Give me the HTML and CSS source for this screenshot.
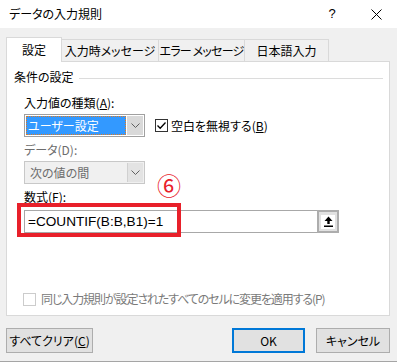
FILE: index.html
```html
<!DOCTYPE html>
<html lang="ja">
<head>
<meta charset="utf-8">
<link rel="stylesheet" href="styles.css">
</head>
<body>
<div class="dialog">
  <div class="titlebar">
    <span class="title">データの入力規則</span>
    <span class="tb-help">?</span>
    <span class="tb-close"><svg width="11" height="11" viewBox="0 0 11 11"><path d="M0.5 0.5 L10.5 10.5 M10.5 0.5 L0.5 10.5" stroke="#000" stroke-width="1" fill="none"/></svg></span>
  </div>
  <div class="main">
    <div class="tabs">
      <div class="tab active">設定</div>
      <div class="tab t2">入力時メッセージ</div>
      <div class="tab t3">エラー メッセージ</div>
      <div class="tab t4">日本語入力</div>
    </div>
    <div class="panel">
      <div class="group-head"><span>条件の設定</span><i class="rule"></i></div>
      <div class="indent">
        <div class="label l1">入力値の種類(<u>A</u>):</div>
        <div class="row">
          <div class="combo">
            <div class="combo-field"><span class="sel">ユーザー設定</span></div>
            <div class="drop"><svg width="9" height="5" viewBox="0 0 9 5"><path d="M0.5 0.5 L4.5 4.5 L8.5 0.5" stroke="#606060" fill="none" stroke-width="1"/></svg></div>
          </div>
          <div class="check">
            <span class="box"><svg width="11" height="11" viewBox="0 0 11 11"><path d="M1.5 5.5 L4.2 8.3 L9.5 2.5" stroke="#000" stroke-width="1.3" fill="none"/></svg></span>
            <span>空白を無視する(<u>B</u>)</span>
          </div>
        </div>
        <div class="label l2 dim">データ(D):</div>
        <div class="combo disabled">
          <div class="combo-field"><span class="val">次の値の間</span></div>
          <div class="drop"><svg width="9" height="5" viewBox="0 0 9 5"><path d="M0.5 0.5 L4.5 4.5 L8.5 0.5" stroke="#606060" fill="none" stroke-width="1"/></svg></div>
        </div>
        <div class="label l3">数式(F):</div>
        <div class="formula">
          <div class="formula-text">=COUNTIF(B:B,B1)=1</div>
          <div class="ref-btn"><span class="ref-icon"><svg width="9" height="11" viewBox="0 0 9 11"><path d="M4.5 0.5 L8.5 5 L5.7 5 L5.7 8 L3.3 8 L3.3 5 L0.5 5 Z" fill="#000"/><rect x="0" y="9.5" width="9" height="1.5" fill="#000"/></svg></span></div>
        </div>
      </div>
      <div class="apply">
        <span class="box off"></span>
        <span class="apply-text">同じ入力規則が設定されたすべてのセルに変更を適用する(P)</span>
      </div>
      <div class="redbox"></div>
      <div class="num">⑥</div>
    </div>
    <div class="buttons">
      <div class="btn clear">すべてクリア(<u>C</u>)</div>
      <div class="btn-group">
        <div class="btn ok">OK</div>
        <div class="btn cancel">キャンセル</div>
      </div>
    </div>
  </div>
  <div class="sheet"></div>
</div>
</body>
</html>
```
FILE: styles.css
```css
* { box-sizing: border-box; }
html, body { margin: 0; padding: 0; }
body {
  width: 397px;
  height: 364px;
  overflow: hidden;
  font-family: "Noto Sans CJK JP", "Noto Sans", sans-serif;
  font-size: 12px;
  line-height: 16px;
  color: #000;
  background: #f0f0f0;
  font-feature-settings: "palt";
}
u { text-decoration: underline; text-underline-offset: 1px; }

.dialog { width: 397px; height: 364px; display: flex; flex-direction: column; }

.titlebar {
  height: 28px;
  background: #fff;
  display: flex;
  align-items: center;
  padding-left: 9px;
}
.title { font-size: 12px; flex: 1; }
.tb-help { width: 20px; text-align: center; margin-right: 29px; font-size: 13px; font-family: "Liberation Sans", sans-serif; }
.tb-close { width: 11px; height: 11px; margin-right: 15px; display: flex; }

.main { flex: 1; padding: 9px 7px 0 6px; }

.tabs { display: flex; align-items: flex-end; height: 24px; }
.tab {
  height: 22px;
  border-top: 1px solid #d9d9d9;
  border-right: 1px solid #d9d9d9;
  background: #f0f0f0;
  display: flex;
  align-items: center;
  justify-content: center;
  padding-top: 1px;
  white-space: nowrap;
}
.tab.active {
  height: 25px;
  margin-bottom: -1px;
  background: #fff;
  border-left: 1px solid #d9d9d9;
  position: relative;
  z-index: 1;
  width: 56px;
  padding-top: 0;
}
.tab.t2 { width: 97px; }
.tab.t3 { width: 86px; letter-spacing: -0.8px; }
.tab.t4 { width: 84px; }

.panel {
  position: relative;
  width: 384px;
  height: 255px;
  background: #fff;
  border: 1px solid #d9d9d9;
  padding: 7px 0 0 7px;
}
.group-head { display: flex; align-items: center; height: 16px; }
.group-head span { white-space: nowrap; }
.rule { flex: 1; height: 1px; background: #dcdcdc; margin: 3px 6px 0 5px; }

.indent { margin-left: 10px; }
.label { height: 16px; white-space: nowrap; }
.l1 { margin-top: 10px; }
.l2 { margin-top: 5px; }
.l3 { margin-top: 5px; }
.dim { color: #6d6d6d; }

.row { display: flex; align-items: center; margin-top: 3px; }

.combo {
  width: 121px;
  height: 23px;
  border: 1px solid #a0a0a0;
  background: #fff;
  display: flex;
  padding: 1px;
}
.combo-field { flex: 1; display: flex; }
.sel {
  flex: 1;
  background: #3399ff;
  color: #fff;
  padding-left: 2px;
  line-height: 19px;
  outline: 1px dotted #e07a20;
  outline-offset: -1px;
}
.drop {
  width: 16px;
  background: #d9d9d9;
  display: flex;
  align-items: center;
  justify-content: center;
  margin-left: 1px;
}
.combo.disabled { margin-top: 3px; background: #f0f0f0; border-color: #c8c8c8; }
.combo.disabled .val { color: #6d6d6d; padding-left: 4px; line-height: 19px; }
.combo.disabled .drop { background: #e3e3e3; border-left: 1px solid #d0d0d0; }

.check { display: flex; align-items: center; margin-left: 10px; white-space: nowrap; }
.box {
  width: 13px;
  height: 13px;
  border: 1px solid #333;
  background: #fff;
  display: flex;
  align-items: center;
  justify-content: center;
  margin-right: 3px;
}
.box.off { border-color: #cccccc; }

.formula {
  margin-top: 5px;
  width: 315px;
  height: 23px;
  border: 1px solid #a8a8a8;
  background: #fff;
  display: flex;
  align-items: stretch;
}
.formula-text {
  flex: 1;
  font-family: "Liberation Sans", Arial, sans-serif;
  font-size: 13.6px;
  line-height: 21px;
  padding-left: 3px;
  font-feature-settings: normal;
}
.ref-btn {
  width: 22px;
  margin: -1px -1px -1px 0;
  border: 2px solid #adadad;
  background: #e1e1e1;
  display: flex;
  align-items: center;
  justify-content: center;
}
.ref-icon { width: 14px; height: 14px; background: #fff; display: flex; align-items: center; justify-content: center; }

.apply {
  margin-top: 58px;
  margin-left: 9px;
  display: flex;
  align-items: center;
  color: #7a7a7a;
  white-space: nowrap;
}
.apply .box { margin-right: 5px; }
.apply-text { letter-spacing: -1.1px; }

.redbox {
  position: absolute;
  left: 10px;
  top: 141px;
  width: 164px;
  height: 34px;
  border: 4px solid #e8202a;
}
.num {
  position: absolute;
  left: 150px;
  top: 110px;
  font-size: 24px;
  line-height: 26px;
  color: #e8202a;
  font-feature-settings: normal;
}

.buttons { display: flex; justify-content: space-between; margin-top: 12px; }
.btn-group { display: flex; gap: 11px; }
.btn {
  height: 25px;
  background: #e1e1e1;
  border: 1px solid #adadad;
  display: flex;
  align-items: center;
  justify-content: center;
  white-space: nowrap;
}
.btn.clear { width: 87px; }
.btn.ok { width: 73px; border: 2px solid #0078d7; }
.btn.cancel { width: 74px; }

.sheet { height: 3px; background: #fff; border-top: 1px solid #a5a5a5; }
```
